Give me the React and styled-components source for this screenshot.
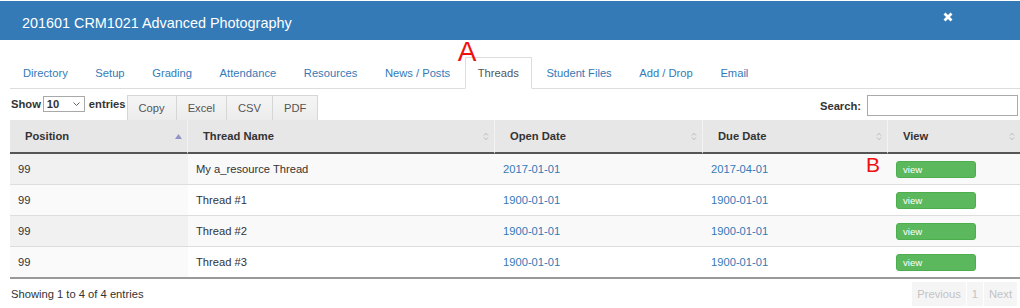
import React from 'react'
import styled, { createGlobalStyle } from 'styled-components'

const GlobalStyle = createGlobalStyle`
  * { box-sizing: border-box; }
  html, body {
    margin: 0;
    padding: 0;
    background: #fff;
  }
  body {
    font-family: "Liberation Sans", Arial, sans-serif;
    font-size: 11.2px;
    color: #333;
    overflow: hidden;
  }
`

const Modal = styled.div`
  width: 1020px;
  height: 308px;
  padding-top: 1px;
`

const Header = styled.div`
  display: flex;
  align-items: flex-start;
  height: 39px;
  padding: 12px 67px 0 22px;
  background: #337ab7;
`

const Title = styled.h4`
  flex: 1;
  margin: 0;
  color: #fff;
  font-weight: 400;
  font-size: 14.4px;
  line-height: 20px;
`

const CloseIcon = styled.svg`
  margin-top: -1px;
  flex: none;
`

const Content = styled.div`
  padding-left: 10px;
`

const Tabs = styled.ul`
  display: flex;
  margin: 17px 0 0;
  padding: 0;
  list-style: none;
  border-bottom: 1px solid #ddd;
`

const Tab = styled.li`
  position: relative;
  margin-right: 1.6px;
  margin-bottom: -1px;
`

const TabLink = styled.a`
  display: block;
  height: 32px;
  padding: 0 12px;
  border: 1px solid ${(p) => (p.$active ? '#ddd' : 'transparent')};
  border-bottom-color: ${(p) => (p.$active ? '#fff' : 'transparent')};
  background: ${(p) => (p.$active ? '#fff' : 'transparent')};
  color: ${(p) => (p.$active ? '#555' : '#337ab7')};
  line-height: 30px;
  text-decoration: none;
  white-space: nowrap;
`

const Marker = styled.span`
  position: absolute;
  left: ${(p) => p.$left}px;
  top: ${(p) => p.$top}px;
  color: #ee1111;
  font-size: ${(p) => p.$size}px;
  line-height: ${(p) => p.$size}px;
  pointer-events: none;
`

const Controls = styled.div`
  display: flex;
  align-items: flex-start;
  height: 25px;
  margin-top: 6px;
`

const LengthLabel = styled.label`
  display: flex;
  align-items: center;
  gap: 3px;
  height: 16px;
  margin: 1px 1px 0 1px;
  font-weight: 700;
`

const SelectWrap = styled.span`
  position: relative;
  display: block;
  margin: 0 1px 0 -1px;
`

const Select = styled.select`
  display: block;
  width: 42px;
  height: 16px;
  padding: 0 0 0 3px;
  border: 1px solid #a9a9a9;
  border-radius: 0;
  background: #fff;
  color: #333;
  font: 700 11.2px "Liberation Sans", Arial, sans-serif;
  appearance: none;
`

const Chevron = styled.svg`
  position: absolute;
  right: 5px;
  top: 6px;
  pointer-events: none;
`

const ButtonGroup = styled.div`
  display: flex;
`

const ExportButton = styled.button`
  height: 25px;
  margin-left: -1px;
  padding: 0 11px;
  border: 1px solid #d6d6d6;
  border-bottom: none;
  background: linear-gradient(#f5f5f5, #ececec);
  color: #555;
  font: 400 11.2px "Liberation Sans", Arial, sans-serif;
  &:first-child {
    margin-left: 0;
  }
`

const SearchLabel = styled.label`
  display: flex;
  align-items: center;
  gap: 6px;
  margin-left: auto;
  margin-right: 2px;
  font-weight: 700;
`

const SearchInput = styled.input`
  width: 151px;
  height: 21px;
  border: 1px solid #aaa;
  padding: 0 4px;
`

const Table = styled.table`
  width: 1010px;
  table-layout: fixed;
  border-collapse: separate;
  border-spacing: 0;
`

const Th = styled.th`
  height: 34px;
  padding: 0 5px 0 15px;
  border-bottom: 2px solid #555;
  border-right: 1px solid #f3f3f3;
  background: #e7e7e7;
  color: #333;
  font-weight: 700;
  text-align: left;
  &:last-child {
    border-right: none;
  }
`

const ThInner = styled.div`
  display: flex;
  align-items: center;
  justify-content: space-between;
`

const Row = styled.tr`
  & > td {
    background: ${(p) => (p.$odd ? '#f9f9f9' : '#fff')};
  }
  & > td:first-child {
    background: ${(p) => (p.$odd ? '#f1f1f1' : '#fafafa')};
  }
  &:last-child > td {
    height: 32px;
    border-bottom: 2px solid #999;
  }
`

const Td = styled.td`
  position: relative;
  height: 31px;
  padding: 0 8px;
  border-bottom: 1px solid #ddd;
  white-space: nowrap;
`

const DateLink = styled.a`
  color: #337ab7;
  text-decoration: none;
`

const ViewButton = styled.button`
  display: block;
  width: 80px;
  height: 17px;
  padding: 0 6px;
  border: 1px solid #4cae4c;
  border-radius: 3px;
  background: #5cb85c;
  color: #fff;
  font: 400 9.6px "Liberation Sans", Arial, sans-serif;
  text-align: left;
`

const Footer = styled.div`
  display: flex;
  align-items: center;
  justify-content: space-between;
  height: 24px;
  margin-top: 3px;
  padding: 0 3px 0 1px;
`

const Pager = styled.div`
  display: flex;
  gap: 1px;
  height: 24px;
`

const PageItem = styled.span`
  display: flex;
  align-items: center;
  padding: 0 5px;
  background: #f5f5f5;
  color: #c3c3c3;
`

const tabs = [
  'Directory',
  'Setup',
  'Grading',
  'Attendance',
  'Resources',
  'News / Posts',
  'Threads',
  'Student Files',
  'Add / Drop',
  'Email',
]

const columns = [
  { label: 'Position', width: 178, sort: 'asc' },
  { label: 'Thread Name', width: 307 },
  { label: 'Open Date', width: 208 },
  { label: 'Due Date', width: 185 },
  { label: 'View', width: 132 },
]

const rows = [
  { pos: 99, name: 'My a_resource Thread', open: '2017-01-01', due: '2017-04-01' },
  { pos: 99, name: 'Thread #1', open: '1900-01-01', due: '1900-01-01' },
  { pos: 99, name: 'Thread #2', open: '1900-01-01', due: '1900-01-01' },
  { pos: 99, name: 'Thread #3', open: '1900-01-01', due: '1900-01-01' },
]

function SortIcon({ dir }) {
  if (dir === 'asc') {
    return (
      <svg width="7" height="5" viewBox="0 0 7 5">
        <path d="M3.5 0 L7 5 L0 5 Z" fill="#8f95c6" />
      </svg>
    )
  }
  return (
    <svg width="6" height="9" viewBox="0 0 6 9">
      <path d="M1 3.5 L3 1.2 L5 3.5 M1 5.5 L3 7.8 L5 5.5" fill="none" stroke="#bdbdbd" strokeWidth="1" />
    </svg>
  )
}

export default function App() {
  return (
    <Modal>
      <GlobalStyle />
      <Header>
        <Title>201601 CRM1021 Advanced Photography</Title>
        <CloseIcon width="10" height="10" viewBox="0 0 10 10">
          <path d="M1.5 1.5 L8.5 8.5 M8.5 1.5 L1.5 8.5" stroke="#fff" strokeWidth="2.8" />
        </CloseIcon>
      </Header>
      <Content>
        <Tabs>
          {tabs.map((t) => (
            <Tab key={t}>
              {t === 'Threads' && (
                <Marker $left={-7} $top={-19} $size={28}>
                  A
                </Marker>
              )}
              <TabLink $active={t === 'Threads'}>{t}</TabLink>
            </Tab>
          ))}
        </Tabs>
        <Controls>
          <LengthLabel>
            Show
            <SelectWrap>
              <Select defaultValue="10">
                <option value="10">10</option>
                <option value="25">25</option>
                <option value="50">50</option>
              </Select>
              <Chevron width="7" height="4" viewBox="0 0 7 4">
                <path d="M0.5 0.5 L3.5 3.5 L6.5 0.5" fill="none" stroke="#666" strokeWidth="1" />
              </Chevron>
            </SelectWrap>
            entries
          </LengthLabel>
          <ButtonGroup>
            <ExportButton>Copy</ExportButton>
            <ExportButton>Excel</ExportButton>
            <ExportButton>CSV</ExportButton>
            <ExportButton>PDF</ExportButton>
          </ButtonGroup>
          <SearchLabel>
            Search:
            <SearchInput type="search" />
          </SearchLabel>
        </Controls>
        <Table>
          <colgroup>
            {columns.map((c) => (
              <col key={c.label} style={{ width: c.width }} />
            ))}
          </colgroup>
          <thead>
            <tr>
              {columns.map((c) => (
                <Th key={c.label}>
                  <ThInner>
                    {c.label}
                    <SortIcon dir={c.sort} />
                  </ThInner>
                </Th>
              ))}
            </tr>
          </thead>
          <tbody>
            {rows.map((r, i) => (
              <Row key={i} $odd={i % 2 === 0}>
                <Td>{r.pos}</Td>
                <Td>{r.name}</Td>
                <Td>
                  <DateLink>{r.open}</DateLink>
                </Td>
                <Td>
                  <DateLink>{r.due}</DateLink>
                </Td>
                <Td>
                  {i === 0 && (
                    <Marker $left={-22} $top={0} $size={21}>
                      B
                    </Marker>
                  )}
                  <ViewButton>view</ViewButton>
                </Td>
              </Row>
            ))}
          </tbody>
        </Table>
        <Footer>
          <span>Showing 1 to 4 of 4 entries</span>
          <Pager>
            <PageItem>Previous</PageItem>
            <PageItem>1</PageItem>
            <PageItem>Next</PageItem>
          </Pager>
        </Footer>
      </Content>
    </Modal>
  )
}
